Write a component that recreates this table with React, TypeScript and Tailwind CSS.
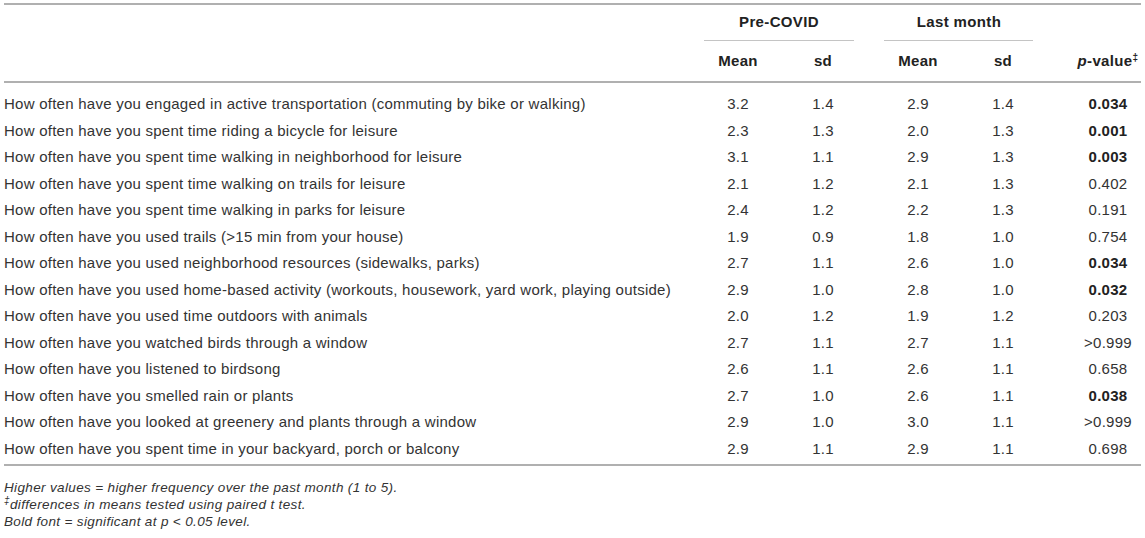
const rows: [string, string, string, string, string, string, boolean][] = [
  ["How often have you engaged in active transportation (commuting by bike or walking)", "3.2", "1.4", "2.9", "1.4", "0.034", true],
  ["How often have you spent time riding a bicycle for leisure", "2.3", "1.3", "2.0", "1.3", "0.001", true],
  ["How often have you spent time walking in neighborhood for leisure", "3.1", "1.1", "2.9", "1.3", "0.003", true],
  ["How often have you spent time walking on trails for leisure", "2.1", "1.2", "2.1", "1.3", "0.402", false],
  ["How often have you spent time walking in parks for leisure", "2.4", "1.2", "2.2", "1.3", "0.191", false],
  ["How often have you used trails (>15 min from your house)", "1.9", "0.9", "1.8", "1.0", "0.754", false],
  ["How often have you used neighborhood resources (sidewalks, parks)", "2.7", "1.1", "2.6", "1.0", "0.034", true],
  ["How often have you used home-based activity (workouts, housework, yard work, playing outside)", "2.9", "1.0", "2.8", "1.0", "0.032", true],
  ["How often have you used time outdoors with animals", "2.0", "1.2", "1.9", "1.2", "0.203", false],
  ["How often have you watched birds through a window", "2.7", "1.1", "2.7", "1.1", ">0.999", false],
  ["How often have you listened to birdsong", "2.6", "1.1", "2.6", "1.1", "0.658", false],
  ["How often have you smelled rain or plants", "2.7", "1.0", "2.6", "1.1", "0.038", true],
  ["How often have you looked at greenery and plants through a window", "2.9", "1.0", "3.0", "1.1", ">0.999", false],
  ["How often have you spent time in your backyard, porch or balcony", "2.9", "1.1", "2.9", "1.1", "0.698", false],
];

const cols = "grid grid-cols-[690px_88px_82px_10px_88px_82px_31px_66px]";

export default function App() {
  return (
    <div
      className="w-[1145px] h-[538px] bg-white px-[4px] pt-[3px] text-[15px] tracking-[0.25px] text-[#333]"
      style={{ fontFamily: '"Liberation Sans", Arial, Helvetica, sans-serif' }}
    >
      {/* header */}
      <div className="border-t-2 border-b-2 border-[#b0b0b0]">
        <div className={`${cols} h-[36px] items-center font-bold text-[#222] tracking-[0.35px]`}>
          <div />
          <div className="col-span-2 h-full flex flex-col">
            <div className="flex-1 flex items-center justify-center">Pre-COVID</div>
            <div className="mx-[10px] border-b border-[#c4c4c4]" />
          </div>
          <div />
          <div className="col-span-2 h-full flex flex-col">
            <div className="flex-1 flex items-center justify-center">Last month</div>
            <div className="ml-[10px] mr-[11px] border-b border-[#c4c4c4]" />
          </div>
          <div />
          <div />
        </div>
        <div className={`${cols} h-[40px] items-center font-bold text-[#222] text-center tracking-[0.35px]`}>
          <div />
          <div>Mean</div>
          <div>sd</div>
          <div />
          <div>Mean</div>
          <div>sd</div>
          <div />
          <div className="whitespace-nowrap">
            <span className="italic">p</span>-value<sup className="text-[10px]">‡</sup>
          </div>
        </div>
      </div>

      {/* body */}
      <div className="border-b-2 border-[#b0b0b0] pt-[8px] pb-[2px]">
        {rows.map(([label, m1, s1, m2, s2, p, sig], i) => (
          <div key={i} className={`${cols} h-[26.5px] items-center text-center`}>
            <div className="text-left whitespace-nowrap">{label}</div>
            <div>{m1}</div>
            <div>{s1}</div>
            <div />
            <div>{m2}</div>
            <div>{s2}</div>
            <div />
            <div className={sig ? "font-bold text-[#222]" : ""}>{p}</div>
          </div>
        ))}
      </div>

      {/* footnotes */}
      <div className="pt-[13px] text-[13.5px] tracking-[0.35px] italic leading-[17px]">
        <div>Higher values = higher frequency over the past month (1 to 5).</div>
        <div>
          <sup className="text-[10px]">‡</sup>differences in means tested using paired t test.
        </div>
        <div>Bold font = significant at p &lt; 0.05 level.</div>
      </div>
    </div>
  );
}
